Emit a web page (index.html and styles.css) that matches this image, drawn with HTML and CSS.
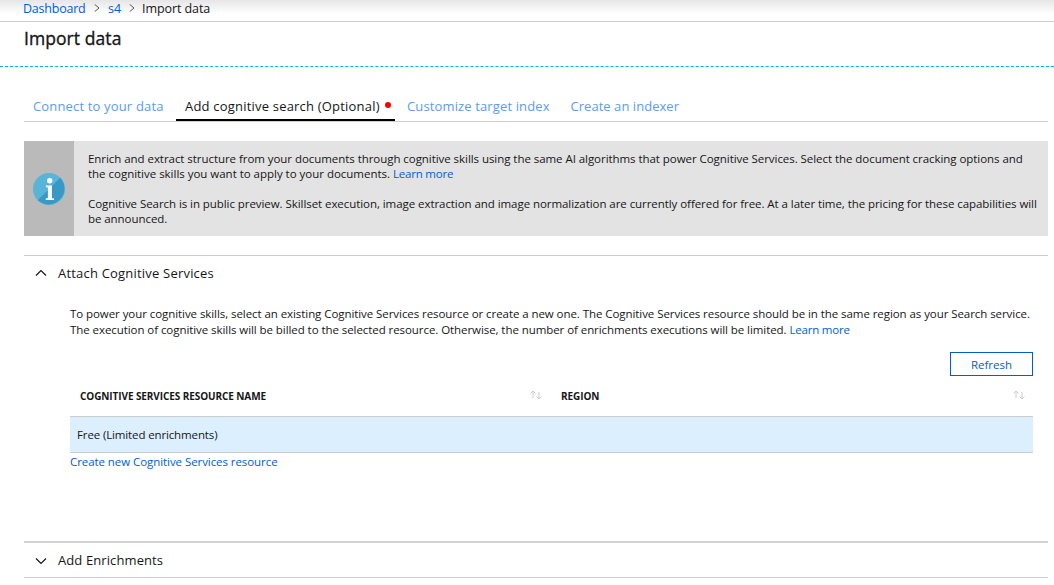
FILE: index.html
```html
<!DOCTYPE html>
<html lang="en">
<head>
<meta charset="utf-8">
<title>Import data</title>
<link rel="stylesheet" href="styles.css">
</head>
<body>
<nav class="breadcrumb">
  <a class="crumb-home" href="#">Dashboard</a>
  <svg class="crumb-sep" viewBox="0 0 6 8"><path d="M.7.4 5 4 .7 7.600"/></svg>
  <a class="crumb-service" href="#">s4</a>
  <svg class="crumb-sep" viewBox="0 0 6 8"><path d="M.7.4 5 4 .7 7.600"/></svg>
  <span class="crumb-current">Import data</span>
</nav>
<header class="blade-title"><h1>Import data</h1></header>
<main>
  <div class="tabs">
    <a class="tab tab-connect" href="#">Connect to your data</a>
    <a class="tab tab-cognitive active" href="#">Add cognitive search (Optional)<i class="dot"></i></a>
    <a class="tab tab-index" href="#">Customize target index</a>
    <a class="tab tab-indexer" href="#">Create an indexer</a>
  </div>
  <section class="info">
    <div class="info-icon">
      <svg viewBox="0 0 32 32"><circle cx="16" cy="16" r="16" fill="#59b4d9"/><path d="M27.300 4.700A16 16 0 0 1 4.700 27.300Z" fill="#3999c6"/><circle cx="16.700" cy="7.700" r="2.700" fill="#fff"/><path d="M12.900 12.600h6v12.300l2.100.7V27h-8.300v-1.400l2.200-.7V14.500l-2-.6Z" fill="#fff"/></svg>
    </div>
    <div class="info-text">
      <p>Enrich and extract structure from your documents through cognitive skills using the same AI algorithms that power Cognitive Services. Select the document cracking options and<br><span class="looser">the cognitive skills you want to apply to your documents. <a href="#">Learn more</a></span></p>
      <p class="preview">Cognitive Search is in public preview. Skillset execution, image extraction and image normalization are currently offered for free. At a later time, the pricing for these capabilities will<br>be announced.</p>
    </div>
  </section>
  <section class="attach">
    <h2><svg class="chevron up" viewBox="0 0 12 8"><path d="M1 6.500 6 1.500l5 5"/></svg><span class="attach-title">Attach Cognitive Services</span></h2>
    <div class="attach-body">
      <p>To power your cognitive skills, select an existing Cognitive Services resource or create a new one. The Cognitive Services resource should be in the same region as your Search service.<br>The execution of cognitive skills will be billed to the selected resource. Otherwise, the number of enrichments executions will be limited. <a href="#">Learn more</a></p>
      <button class="refresh">Refresh</button>
      <div class="grid-head">
        <div class="col-name"><span>COGNITIVE SERVICES RESOURCE NAME</span><svg class="sort" viewBox="0 0 12 10"><path d="M3 8V1M.5 3.500 3 1l2.500 2.500M9 2v7M6.500 6.500 9 9l2.500-2.500"/></svg></div>
        <div class="col-region"><span>REGION</span><svg class="sort" viewBox="0 0 12 10"><path d="M3 8V1M.5 3.500 3 1l2.500 2.500M9 2v7M6.500 6.500 9 9l2.500-2.500"/></svg></div>
      </div>
      <div class="grid-row">Free (Limited enrichments)</div>
      <a class="create" href="#">Create new Cognitive Services resource</a>
    </div>
  </section>
  <section class="enrich">
    <h2><svg class="chevron" viewBox="0 0 12 8"><path d="M1 1.500l5 5 5-5"/></svg><span class="enrich-title">Add Enrichments</span></h2>
  </section>
</main>
</body>
</html>
```
FILE: styles.css
```css
* { box-sizing: border-box; }
body { margin: 0; height: 585px; overflow: hidden; background: #fff; color: #161616; font: 11.5px/15px "Open Sans", "Noto Sans", sans-serif; }
a { color: #015cda; text-decoration: none; }
p { margin: 0; white-space: nowrap; }
p a { letter-spacing: -.2px; }
.breadcrumb { display: flex; align-items: flex-start; height: 22px; padding-left: 23px; border-bottom: 1px solid #ccc; background: linear-gradient(#e6e6e6, #fff 14px); font-size: 12.5px; line-height: 17px; }
.crumb-home { width: 62px; letter-spacing: -.22px; }
.crumb-sep { width: 6px; height: 8px; margin: 4px 8px 0 9px; fill: none; stroke: #555; }
.crumb-service { width: 12px; }
.crumb-current { margin-left: -1px; letter-spacing: -.08px; }
.blade-title { height: 45px; padding-left: 24px; border-bottom: 1px dashed #00b4f0; }
h1 { margin: 0; font-size: 17.5px; line-height: 32px; font-weight: 500; letter-spacing: .07px; -webkit-text-stroke: .35px; }
main { padding: 0 6px 0 24px; }
.tabs { display: flex; height: 55px; padding-top: 28px; border-bottom: 1px solid #ccc; font-size: 13px; line-height: 22px; white-space: nowrap; }
.tab { padding-left: 9px; color: #5d9bee; letter-spacing: .16px; }
.tab-connect { width: 152px; }
.tab-cognitive { position: relative; width: 219px; border-bottom: 2px solid #000; color: #161616; letter-spacing: .2px; }
.tab-index { width: 167px; padding-left: 12px; letter-spacing: .13px; }
.tab-indexer { padding-left: 8.500px; letter-spacing: .04px; }
.dot { position: absolute; right: 4px; top: 6.500px; width: 6px; height: 6px; border-radius: 50%; background: #f00; }
.info { display: flex; height: 95px; margin-top: 19px; background: #e3e3e3; }
.info-icon { display: flex; flex: none; align-items: center; width: 50px; padding-left: 9px; background: #bababa; }
.info-icon svg { width: 32px; height: 32px; }
.info-text { padding: 10px 0 0 14px; letter-spacing: -.053px; }
.info-text p { margin-bottom: 15px; }
.looser { letter-spacing: -.02px; }
.info-text .preview { letter-spacing: -.062px; }
.attach { height: 286px; margin-top: 19px; border-top: 1px solid #ccc; }
h2 { display: flex; align-items: center; margin: 0; height: 35px; padding-left: 11px; font-size: 13px; font-weight: 400; }
.attach-title { letter-spacing: .2px; }
.enrich-title { letter-spacing: .1px; }
.chevron { width: 12px; height: 8px; margin-right: 11px; fill: none; stroke: #161616; stroke-width: 1.200; }
.chevron.up { margin-bottom: 2px; }
.attach-body { display: flex; flex-direction: column; padding: 15px 15px 0 46px; line-height: 16px; letter-spacing: -.067px; }
.refresh { align-self: flex-end; width: 83px; height: 24px; margin-top: 14px; padding: 1px 0 0; border: 1px solid #015cda; background: #fff; color: #015cda; font: inherit; }
.grid-head { display: flex; height: 40px; font-size: 10px; font-weight: 700; line-height: 41px; letter-spacing: -.09px; }
.grid-head div { display: flex; justify-content: space-between; padding: 0 9px 0 10px; }
.col-name { width: 481px; }
.grid-head .col-region { width: 482px; padding-right: 8px; }
.sort { width: 12px; height: 10px; margin-top: 14px; fill: none; stroke: #ccc; stroke-width: 1; }
.grid-row { height: 37px; padding-left: 7px; border: solid #ccc; border-width: 1px 0; background: #dceffe; line-height: 36px; letter-spacing: -.13px; }
.create { line-height: 18px; }
.enrich { height: 37px; border-top: 2px solid #d2d2d2; border-bottom: 1px solid #ccc; }
```
